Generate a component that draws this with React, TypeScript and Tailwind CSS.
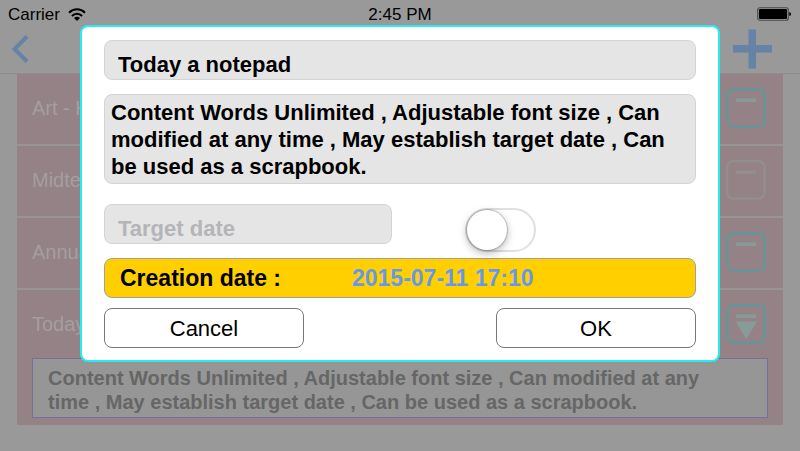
import { useState } from 'react';

type Note = {
  title: string;
  icon: 'minus' | 'arrow';
  muted?: boolean;
};

const notes: Note[] = [
  { title: 'Art - Home', icon: 'minus' },
  { title: 'Midterm', icon: 'minus', muted: true },
  { title: 'Annual', icon: 'minus' },
  { title: 'Today', icon: 'arrow' },
];

const noteText =
  'Content Words Unlimited , Adjustable font size , Can modified at any time , May establish target date , Can be used as a scrapbook.';

function WifiIcon() {
  return (
    <svg width="18" height="13" viewBox="0 0 18 13" fill="none" stroke="#000" strokeWidth="2">
      <path d="M1 4.8C5.5 0.2 12.5 0.2 17 4.8" />
      <path d="M3.9 8C6.8 5 11.2 5 14.1 8" />
      <path d="M9 13L6 9.9C7.7 8.3 10.3 8.3 12 9.9Z" fill="#000" stroke="none" />
    </svg>
  );
}

function BatteryIcon() {
  return (
    <svg width="35" height="14" viewBox="0 0 35 14">
      <rect x="0.75" y="0.75" width="30.5" height="12.5" rx="2" fill="none" stroke="#4a4a4a" strokeWidth="1.2" />
      <rect x="2" y="2" width="28" height="10" rx="1" fill="#000" />
      <path d="M32.3 5C34.6 5 34.6 9 32.3 9Z" fill="#000" />
    </svg>
  );
}

function RowIcon({ icon, muted }: { icon: Note['icon']; muted?: boolean }) {
  return (
    <svg width="40" height="40" viewBox="0 0 40 40">
      <rect x="1.2" y="1.2" width="37.4" height="37.4" rx="6" fill="none" stroke={muted ? '#918f8f' : '#5e9899'} strokeWidth="2.2" />
      <rect x="10" y="10.5" width="20" height="3.5" fill={muted ? '#918f8f' : '#879b99'} />
      {icon === 'arrow' && <path d="M9.5 17.5H31L20.3 35Z" fill="#879b99" />}
    </svg>
  );
}

export default function App() {
  const [title, setTitle] = useState('Today a notepad');
  const [content, setContent] = useState(noteText);
  const [targetDate, setTargetDate] = useState('');
  const [hasTarget, setHasTarget] = useState(false);

  return (
    <div className="min-h-screen bg-[#999999] font-['Liberation_Sans',Arial,sans-serif] text-black">
      {/* Status bar */}
      <div className="grid h-7 grid-cols-3 items-center px-2 text-[17px]">
        <div className="flex items-center gap-2 pt-px">
          <span>Carrier</span>
          <WifiIcon />
        </div>
        <div className="pt-px text-center">2:45 PM</div>
        <div className="flex justify-end">
          <BatteryIcon />
        </div>
      </div>

      {/* Navigation bar */}
      <header className="flex h-[46px] items-center justify-between border-b border-[#8e8e8e] pr-7 pb-1 pl-3">
        <button type="button" aria-label="Back">
          <svg width="17" height="28" viewBox="0 0 17 28" fill="none" stroke="#6682a6" strokeWidth="4">
            <path d="M15 1.5L2.5 14L15 26.5" />
          </svg>
        </button>
        <button type="button" aria-label="Add note">
          <svg width="40" height="40" viewBox="0 0 40 40" fill="#6682a6">
            <path d="M16.5 0.5H24V16H40V23.5H24V39.5H16.5V23.5H1V16H16.5Z" />
          </svg>
        </button>
      </header>

      <main className="mx-[17px] bg-[#958287] pb-[7px]">
        <ul className="divide-y-2 divide-[#979595]">
          {notes.map((note) => (
            <li key={note.title} className="flex h-[72px] items-center justify-between pr-[17px] pb-[2px] pl-[15px] last:h-[68px] last:pb-0">
              <span className="text-xl text-[#a39fa0]">{note.title}</span>
              <RowIcon icon={note.icon} muted={note.muted} />
            </li>
          ))}
        </ul>
        <p className="mx-[15px] border border-[#7b6c98] bg-[#969696] pt-[7px] pr-10 pb-[3px] pl-[15px] text-xl leading-6 font-bold text-[#666666]">
          {noteText}
        </p>
      </main>

      {/* Edit dialog */}
      <form
        role="dialog"
        aria-label="Edit note"
        onSubmit={(e) => e.preventDefault()}
        className="fixed inset-x-20 top-[25px] rounded-lg border-2 border-[#24eef2] bg-white px-[22px] pt-[13px] pb-3"
      >
        <input
          aria-label="Title"
          value={title}
          onChange={(e) => setTitle(e.target.value)}
          className="block h-10 w-full rounded-lg border border-[#d4d4d4] bg-[#e5e5e5] px-[13px] pt-[10px] text-[22px] font-bold"
        />
        <textarea
          aria-label="Content"
          value={content}
          onChange={(e) => setContent(e.target.value)}
          className="mt-[14px] block h-[90px] w-full resize-none overflow-hidden rounded-lg border border-[#d4d4d4] bg-[#e5e5e5] px-[6px] py-1 text-[22px] leading-[27px] font-bold"
        />
        <div className="mt-5 flex items-start gap-[73px]">
          <input
            aria-label="Target date"
            placeholder="Target date"
            value={targetDate}
            onChange={(e) => setTargetDate(e.target.value)}
            className="block h-10 w-[288px] rounded-lg border border-[#d4d4d4] bg-[#e5e5e5] px-[13px] pt-[10px] text-[22px] font-bold placeholder:text-[#b4b4b9]"
          />
          <input
            type="checkbox"
            aria-label="Set target date"
            checked={hasTarget}
            onChange={(e) => setHasTarget(e.target.checked)}
            className="mt-1 h-11 w-[71px] appearance-none rounded-full border-2 border-[#e0e0e0] bg-white before:block before:size-10 before:rounded-full before:bg-white before:shadow-[0_3px_8px_rgba(0,0,0,0.3),0_0_1px_1px_rgba(0,0,0,0.2)] checked:bg-[#4cd964] checked:before:translate-x-7"
          />
        </div>
        <div className="mt-[6px] flex h-10 items-center rounded-lg border border-[#a0a0a0] bg-[#ffcf00] px-[15px] text-[23px] font-bold">
          <span className="w-[232px]">Creation date :</span>
          <span className="text-[#6699ee]">2015-07-11 17:10</span>
        </div>
        <div className="mt-[10px] flex justify-between text-[22px]">
          <button type="button" className="h-10 w-[200px] rounded-lg border border-[#777777]">
            Cancel
          </button>
          <button type="submit" className="h-10 w-[200px] rounded-lg border border-[#777777]">
            OK
          </button>
        </div>
      </form>
    </div>
  );
}
